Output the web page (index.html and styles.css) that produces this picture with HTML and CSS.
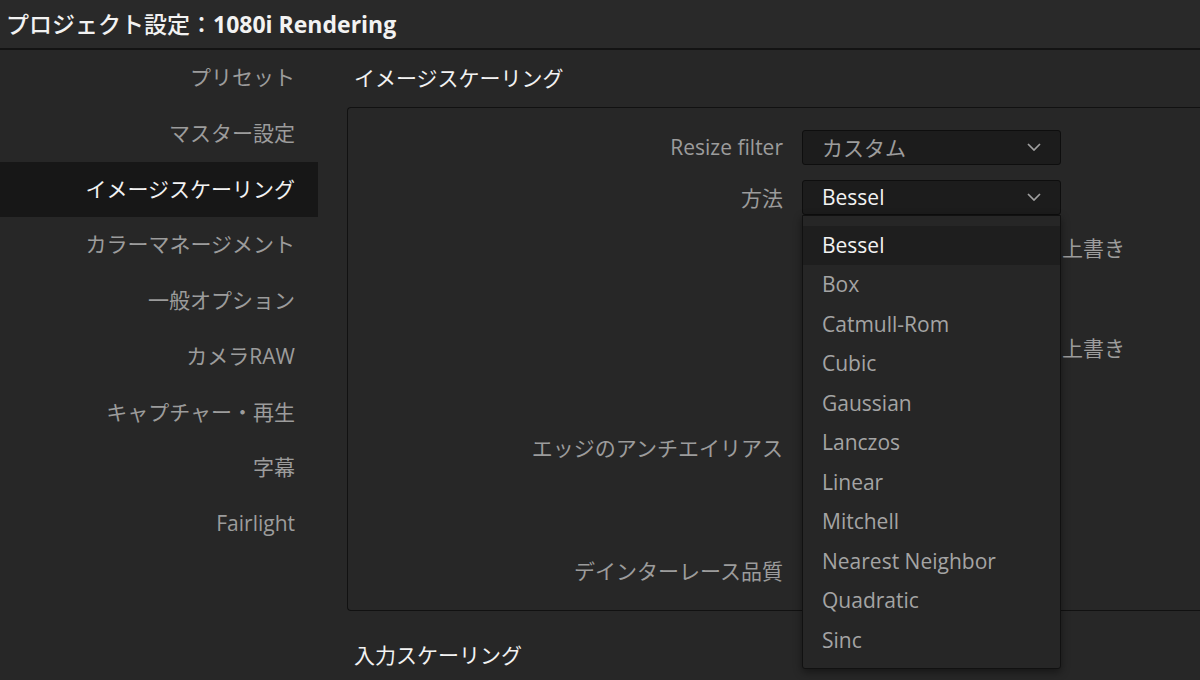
FILE: index.html
```html
<!DOCTYPE html>
<html>
    <head>
        <title>プロジェクト設定</title>
        <link rel="stylesheet" href="styles.css">
    </head>
    <body>
        <div class="titlebar">プロジェクト設定：<b>1080i Rendering</b></div>
        <div class="main">
            <ul class="nav">
                <li>プリセット</li>
                <li>マスター設定</li>
                <li class="active">イメージスケーリング</li>
                <li>カラーマネージメント</li>
                <li>一般オプション</li>
                <li>カメラRAW</li>
                <li>キャプチャー・再生</li>
                <li>字幕</li>
                <li>Fairlight</li>
            </ul>
            <div class="content">
                <h2 class="section">イメージスケーリング</h2>
                <div class="panel">
                    <div class="row">
                        <label class="label">Resize filter</label>
                        <div class="select muted">
                            <span>カスタム</span>
                            <svg class="chevron" width="14" height="8" viewBox="0 0 14 8"><polyline points="1,1 7,7 13,1"/></svg>
                        </div>
                    </div>
                    <div class="row">
                        <label class="label">方法</label>
                        <div class="select">
                            <span>Bessel</span>
                            <svg class="chevron" width="14" height="8" viewBox="0 0 14 8"><polyline points="1,1 7,7 13,1"/></svg>
                            <ul class="menu">
                                <li class="current">Bessel</li>
                                <li>Box</li>
                                <li>Catmull-Rom</li>
                                <li>Cubic</li>
                                <li>Gaussian</li>
                                <li>Lanczos</li>
                                <li>Linear</li>
                                <li>Mitchell</li>
                                <li>Nearest Neighbor</li>
                                <li>Quadratic</li>
                                <li>Sinc</li>
                            </ul>
                        </div>
                    </div>
                    <div class="row">
                        <label class="label"></label>
                        <div class="check">上書き</div>
                    </div>
                    <div class="row">
                        <label class="label"></label>
                        <div></div>
                    </div>
                    <div class="row">
                        <label class="label"></label>
                        <div class="check">上書き</div>
                    </div>
                    <div class="row">
                        <label class="label"></label>
                        <div></div>
                    </div>
                    <div class="row">
                        <label class="label">エッジのアンチエイリアス</label>
                        <div></div>
                    </div>
                    <div class="row last">
                        <label class="label">デインターレース品質</label>
                        <div></div>
                    </div>
                </div>
                <h2 class="section second">入力スケーリング</h2>
            </div>
        </div>
    </body>
</html>
```

FILE: styles.css
```css
html, body {
    margin: 0;
    height: 100%;
    overflow: hidden;
}
body {
    background: #272727;
    color: #9c9c9c;
    font-family: "Open Sans", "Noto Sans CJK JP", sans-serif;
    font-size: 21px;
}
ul {
    list-style: none;
    margin: 0;
    padding: 0;
}
.titlebar {
    height: 48px;
    line-height: 48px;
    padding-left: 6px;
    background: #292929;
    border-bottom: 2px solid #131313;
    color: #f2f2f2;
    font-size: 23px;
    font-weight: 500;
    white-space: nowrap;
}
.titlebar b {
    font-weight: 700;
}
.main {
    display: grid;
    grid-template-columns: 318px 1fr;
    column-gap: 29px;
}
.nav li {
    height: 55.75px;
    line-height: 55.75px;
    padding-right: 23px;
    text-align: right;
    white-space: nowrap;
}
.nav li.active {
    background: #171717;
    color: #f2f2f2;
}
.section {
    margin: 0;
    height: 57px;
    line-height: 57px;
    padding-left: 7px;
    color: #f2f2f2;
    font-size: 21px;
    font-weight: 400;
}
.section.second {
    margin-top: 16px;
}
.panel {
    box-sizing: border-box;
    height: 504px;
    padding-top: 14px;
    border: 1px solid #111;
    border-right: none;
    border-radius: 4px 0 0 4px;
}
.row {
    display: grid;
    grid-template-columns: 435px 259px;
    column-gap: 19px;
    align-items: center;
    height: 50px;
}
.row.last {
    margin-top: 73px;
}
.label {
    text-align: right;
    white-space: nowrap;
}
.select {
    position: relative;
    box-sizing: border-box;
    height: 35px;
    display: flex;
    align-items: center;
    justify-content: space-between;
    padding: 0 19px 0 19px;
    background: #1c1c1c;
    border: 1px solid #0e0e0e;
    border-radius: 3px;
    color: #f2f2f2;
}
.select.muted {
    color: #9c9c9c;
}
.chevron polyline {
    fill: none;
    stroke: #a0a0a0;
    stroke-width: 1.7;
}
.check {
    padding-left: 260px;
    white-space: nowrap;
}
.menu {
    position: absolute;
    top: 34px;
    left: -1px;
    z-index: 2;
    box-sizing: border-box;
    width: 259px;
    padding: 10px 0 8px;
    background: #262626;
    border: 1px solid #111;
    border-radius: 0 0 3px 3px;
    box-shadow: 0 3px 8px rgba(0, 0, 0, .45);
}
.menu li {
    height: 39.5px;
    line-height: 39.5px;
    padding-left: 19px;
    color: #a4a4a4;
    white-space: nowrap;
}
.menu li.current {
    background: #1e1e1e;
    color: #f2f2f2;
}
```
